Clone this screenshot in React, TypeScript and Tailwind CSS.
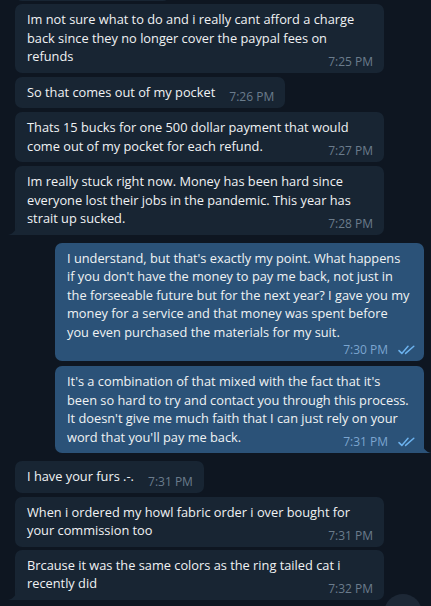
import React from "react";

type Message = {
  lines: string[];
  time: string;
  out?: boolean;
  tail?: boolean;
  timeBelow?: boolean;
  gap: string;
};

const messages: Message[] = [
  {
    lines: [
      "Im not sure what to do and i really cant afford a charge",
      "back since they no longer cover the paypal fees on",
      "refunds",
    ],
    time: "7:25 PM",
    gap: "mt-[3px]",
  },
  { lines: ["So that comes out of my pocket"], time: "7:26 PM", gap: "mt-[4px]" },
  {
    lines: [
      "Thats 15 bucks for one 500 dollar payment that would",
      "come out of my pocket for each refund.",
    ],
    time: "7:27 PM",
    gap: "mt-[4px]",
  },
  {
    lines: [
      "Im really stuck right now. Money has been hard since",
      "everyone lost their jobs in the pandemic. This year has",
      "strait up sucked.",
    ],
    time: "7:28 PM",
    gap: "mt-[4px]",
    tail: true,
  },
  {
    lines: [
      "I understand, but that's exactly my point. What happens",
      "if you don't have the money to pay me back, not just in",
      "the forseeable future but for the next year? I gave you my",
      "money for a service and that money was spent before",
      "you even purchased the materials for my suit.",
    ],
    time: "7:30 PM",
    out: true,
    timeBelow: true,
    gap: "mt-[8px]",
  },
  {
    lines: [
      "It's a combination of that mixed with the fact that it's",
      "been so hard to try and contact you through this process.",
      "It doesn't give me much faith that I can just rely on your",
      "word that you'll pay me back.",
    ],
    time: "7:31 PM",
    out: true,
    gap: "mt-[5px]",
    tail: true,
  },
  { lines: ["I have your furs .-."], time: "7:31 PM", gap: "mt-[8px]" },
  {
    lines: [
      "When i ordered my howl fabric order i over bought for",
      "your commission too",
    ],
    time: "7:31 PM",
    gap: "mt-[4px]",
  },
  {
    lines: [
      "Brcause it was the same colors as the ring tailed cat i",
      "recently did",
    ],
    time: "7:32 PM",
    gap: "mt-[3px]",
    tail: true,
  },
];

const DoubleCheck = () => (
  <svg width="17" height="10" viewBox="0 0 17 10" fill="none">
    <path
      d="M1 5.6 L3.8 8.4 L10 1.2"
      stroke="#6cb2ee"
      strokeWidth="1.5"
      strokeLinecap="round"
      strokeLinejoin="round"
    />
    <path
      d="M7.6 8.4 L15.8 1.2"
      stroke="#6cb2ee"
      strokeWidth="1.5"
      strokeLinecap="round"
      strokeLinejoin="round"
    />
  </svg>
);

const Tail = ({ out }: { out?: boolean }) =>
  out ? (
    <svg
      width="9"
      height="12"
      viewBox="0 0 9 12"
      className="absolute -right-[7px] bottom-0"
    >
      <path d="M0 0 C0 7 4 11 9 12 H0 Z" fill="#2b5278" />
    </svg>
  ) : (
    <svg
      width="9"
      height="12"
      viewBox="0 0 9 12"
      className="absolute -left-[7px] bottom-0"
    >
      <path d="M9 0 C9 7 5 11 0 12 H9 Z" fill="#182533" />
    </svg>
  );

const Bubble = ({ msg }: { msg: Message }) => {
  const side = msg.out
    ? "self-end mr-[7px] bg-[#2b5278]"
    : "self-start ml-[15px] bg-[#182533]";
  const width = msg.lines.length > 1 ? "w-[369px]" : "w-fit";
  const corners = msg.tail
    ? msg.out
      ? "rounded-[7px] rounded-br-none"
      : "rounded-[7px] rounded-bl-none"
    : "rounded-[7px]";
  const bottom = msg.timeBelow ? "pb-[20px]" : "pb-[7px]";

  return (
    <div
      className={`relative px-[12px] pt-[6px] text-[12.8px] leading-[18.5px] text-[#f0f2f4] ${side} ${width} ${corners} ${bottom} ${msg.gap}`}
    >
      {msg.lines.map((line, i) => (
        <React.Fragment key={i}>
          {i > 0 && <br />}
          <span className="whitespace-nowrap">{line}</span>
        </React.Fragment>
      ))}
      {!msg.timeBelow &&
        (msg.out ? (
          <span className="inline-block w-[82px]" />
        ) : (
          <span className="inline-block w-[58px]" />
        ))}
      <div
        className={`absolute bottom-[3px] flex items-center gap-[10px] text-[12px] leading-[16px] ${
          msg.out ? "right-[9px]" : "right-[11px]"
        }`}
      >
        <span className={msg.out ? "text-[#7ba5cf]" : "text-[#6b7c8c]"}>
          {msg.time}
        </span>
        {msg.out && <DoubleCheck />}
      </div>
      {msg.tail && <Tail out={msg.out} />}
    </div>
  );
};

export default function App() {
  return (
    <div
      className="relative h-[606px] w-[431px] overflow-hidden bg-[#0e1621]"
      style={{ fontFamily: '"Open Sans", "Noto Sans", sans-serif' }}
    >
      <div className="flex flex-col">
        {/* bottom of the previous bubble, cut off by the top edge */}
        <div className="-mt-[29px] ml-[15px] h-[30px] w-[155px] self-start rounded-[7px] bg-[#182533]" />
        {messages.map((m, i) => (
          <Bubble key={i} msg={m} />
        ))}
      </div>

      {/* scroll-to-bottom button */}
      <div className="absolute left-[384px] top-[594px] h-[38px] w-[38px] rounded-full bg-[#1d2836]" />
    </div>
  );
}
